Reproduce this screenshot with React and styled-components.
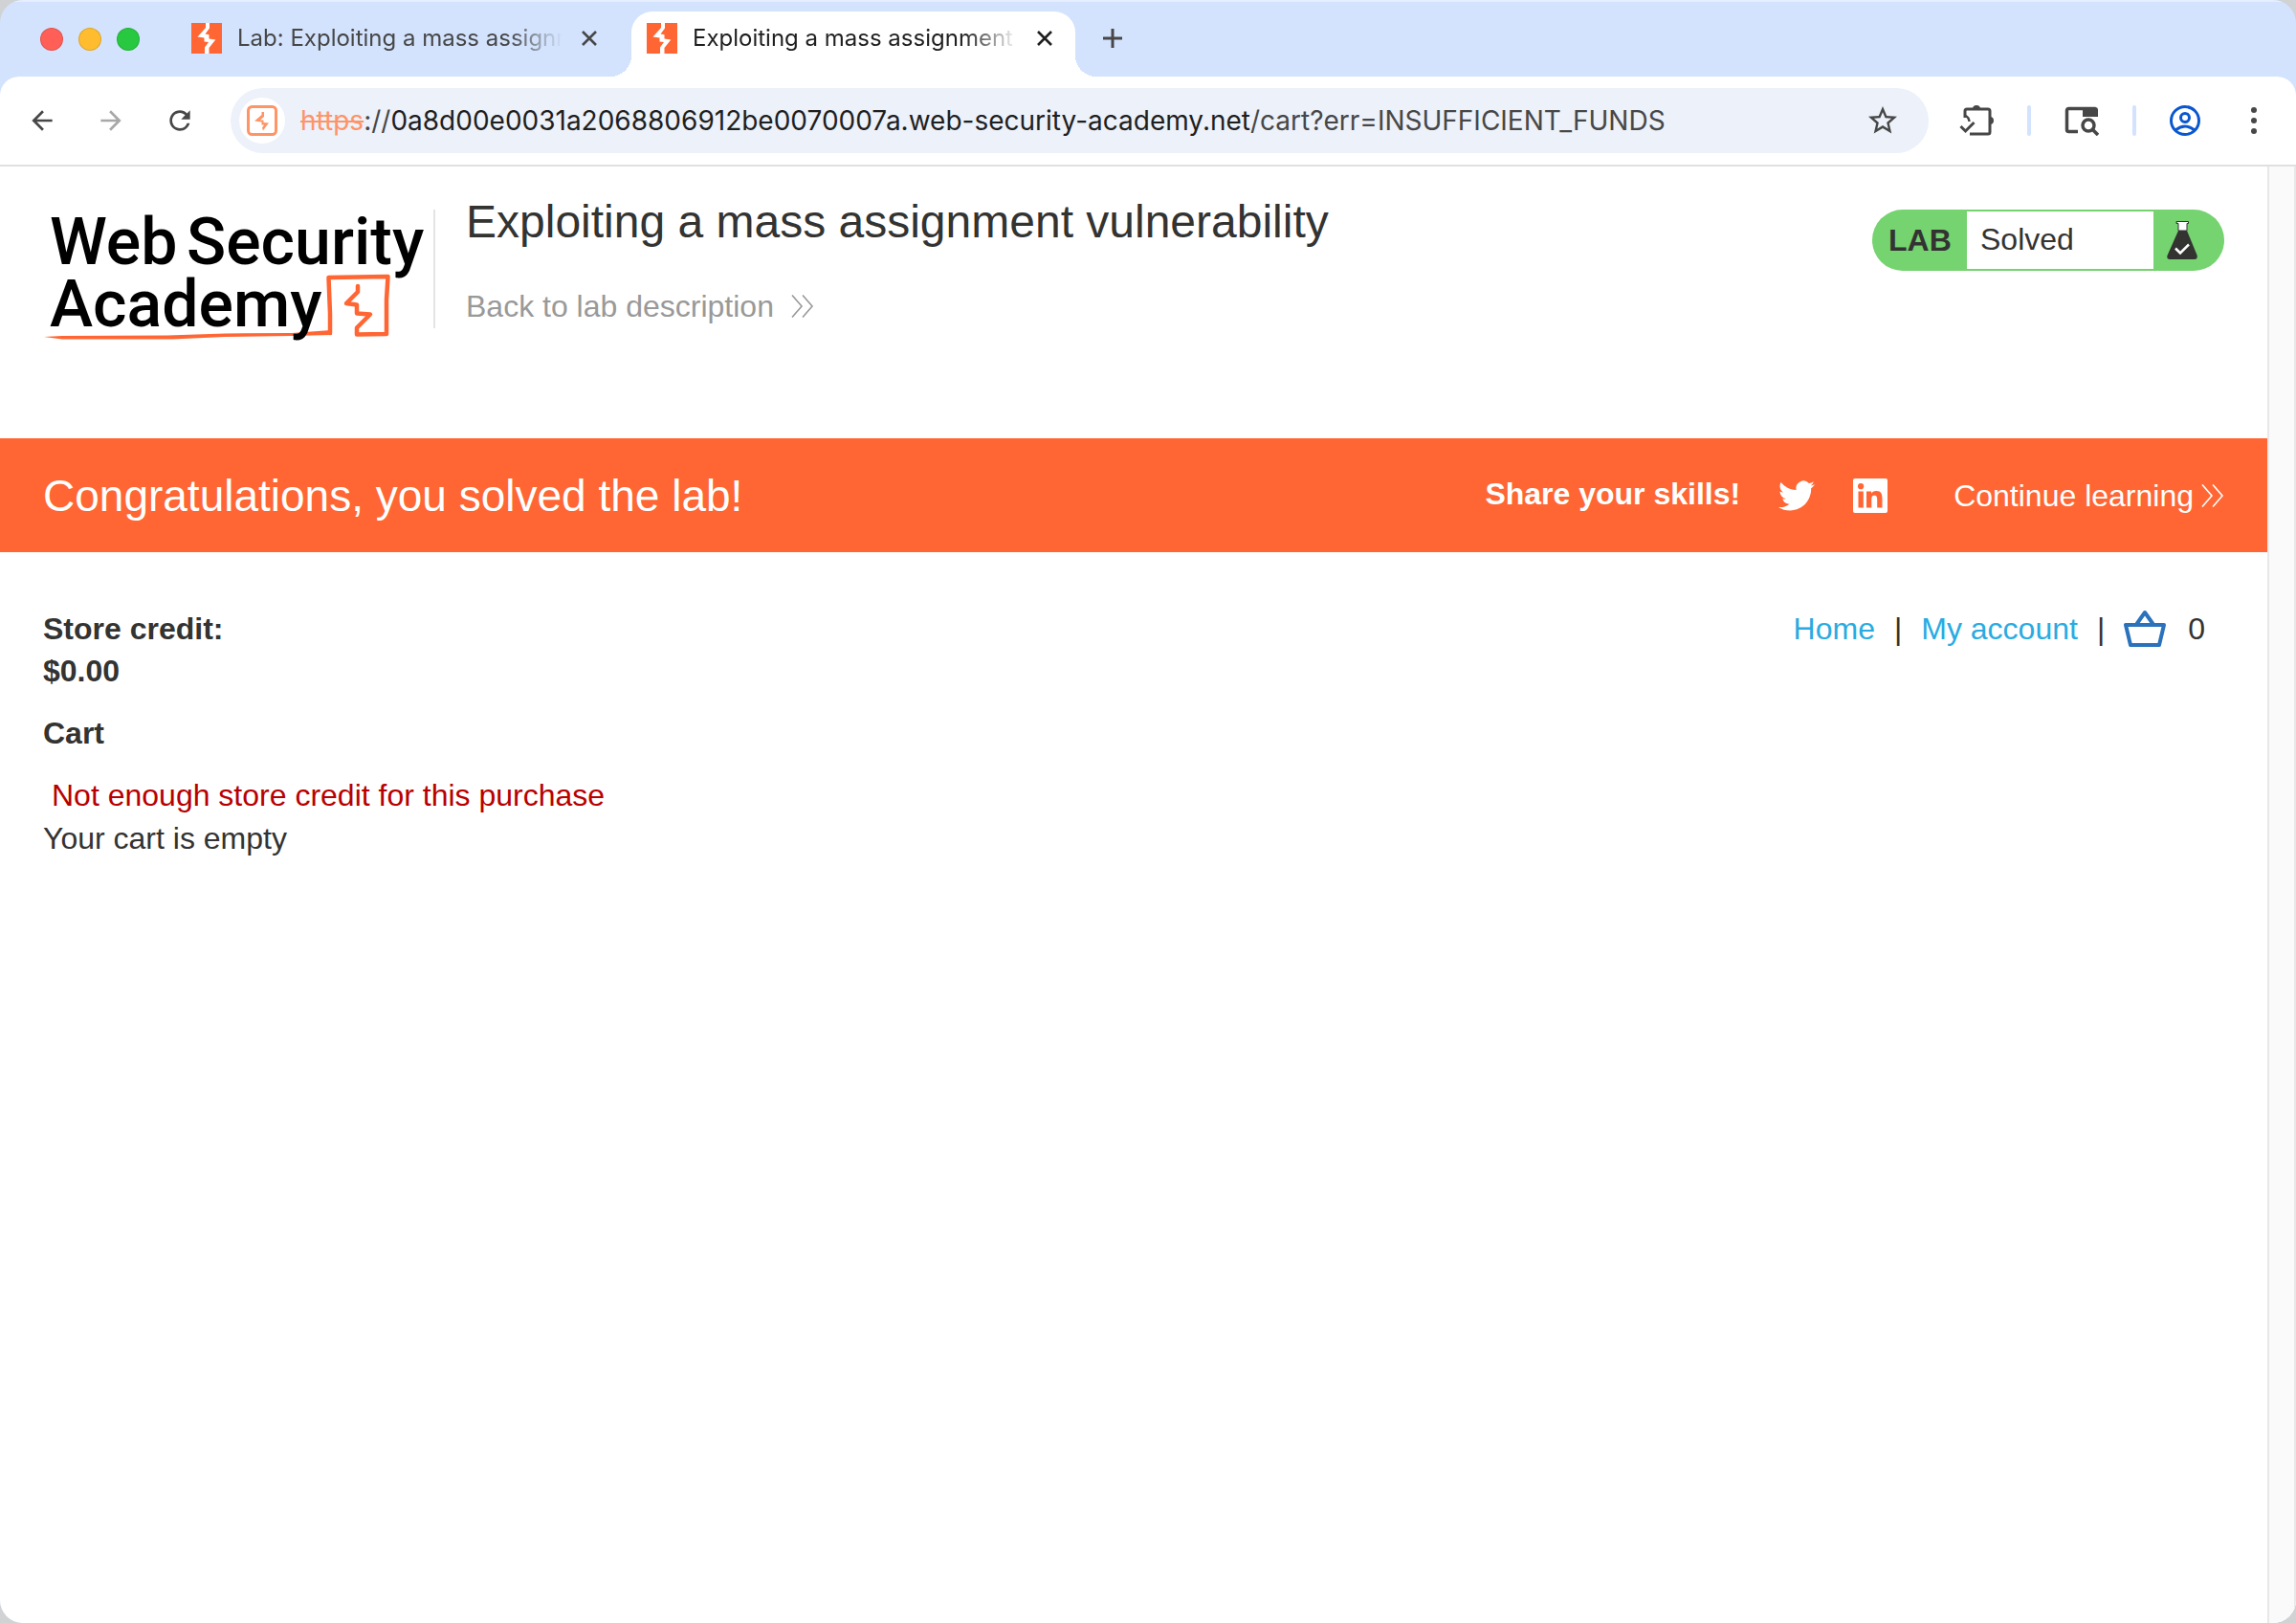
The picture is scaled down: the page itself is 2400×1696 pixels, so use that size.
import React, { useState } from 'react';
import styled, { createGlobalStyle } from 'styled-components';
import { MdArrowBack, MdArrowForward, MdRefresh, MdStarBorder } from 'react-icons/md';

const theme = {
  orange: '#ff6633',
  text: '#333332',
  link: '#29abe2',
  green: '#75d370',
  icon: '#474747',
  strip: '#d3e3fd',
};

const GlobalStyle = createGlobalStyle`
  *, *::before, *::after { box-sizing: border-box; }
  body {
    margin: 0;
    background: #d0d2d4;
    font-family: "Liberation Sans", Arial, sans-serif;
  }
  button {
    padding: 0;
    border: 0;
    background: none;
    font: inherit;
    color: inherit;
    cursor: pointer;
  }
  a { text-decoration: none; color: inherit; }
  svg { display: block; flex-shrink: 0; }
`;

const Window = styled.div`
  display: flex;
  flex-direction: column;
  min-height: 100vh;
  overflow: hidden;
  border-radius: 24px;
  background: ${theme.strip};
`;

/* ---------- tab strip ---------- */

const TabStrip = styled.div`
  display: flex;
  align-items: flex-end;
  height: 80px;
  padding-left: 42px;
  border-top: 2px solid #e6eefd;
  font-family: Inter, Roboto, sans-serif;
`;

const Lights = styled.div`
  display: flex;
  align-items: center;
  gap: 16px;
  height: 66px;
  margin-right: 38px;
  padding-bottom: 12px;
`;

const Light = styled.button`
  width: 24px;
  height: 24px;
  border: 1px solid rgba(0, 0, 0, 0.12);
  border-radius: 50%;
  background: ${(props) => props.$color};
`;

const Tab = styled.div`
  position: relative;
  display: flex;
  align-items: center;
  width: ${(props) => (props.$active ? 464 : 476)}px;
  height: 68px;
  padding: 0 ${(props) => (props.$active ? 20 : 32)}px 12px 16px;
  border-radius: 22px 22px 0 0;
  background: ${(props) => (props.$active ? '#fff' : 'transparent')};
  color: ${(props) => (props.$active ? '#1f1f1f' : '#474747')};

  /* outward curves at the foot of the active tab */
  &::before, &::after {
    content: '';
    display: ${(props) => (props.$active ? 'block' : 'none')};
    position: absolute;
    bottom: 0;
    width: 22px;
    height: 22px;
  }
  &::before {
    left: -22px;
    background: radial-gradient(circle at 0 0, transparent 22px, #fff 22px);
  }
  &::after {
    right: -22px;
    background: radial-gradient(circle at 100% 0, transparent 22px, #fff 22px);
  }
`;

const TabTitle = styled.button`
  flex: 1;
  min-width: 0;
  margin: 0 16px;
  overflow: hidden;
  font-size: 24px;
  line-height: 32px;
  text-align: left;
  white-space: nowrap;
  mask-image: linear-gradient(to right, #000 calc(100% - 56px), transparent);
`;

const TabClose = styled.button`
  padding: 4px;
`;

const NewTab = styled.button`
  margin: 0 0 29px 28px;
  color: ${theme.icon};
`;

/* ---------- toolbar ---------- */

const Toolbar = styled.div`
  display: flex;
  align-items: center;
  height: 94px;
  padding: 0 41px 0 28px;
  border-bottom: 2px solid #e0e0e0;
  border-radius: 20px 20px 0 0;
  background: #fff;
  color: ${theme.icon};
`;

const NavButtons = styled.div`
  display: flex;
  gap: 40px;
  margin-right: 37px;
`;

const NavButton = styled.button`
  color: ${theme.icon};
  &:disabled { color: #a8a8a8; }
`;

const AddressBar = styled.div`
  display: flex;
  align-items: center;
  flex: 1;
  height: 68px;
  padding: 0 30px 0 9px;
  border-radius: 34px;
  background: #ecf1fa;
`;

const SiteInfo = styled.button`
  display: grid;
  place-items: center;
  width: 48px;
  height: 48px;
  margin-right: 16px;
  border-radius: 50%;
  background: #fff;
`;

const Url = styled.div`
  flex: 1;
  font-family: Inter, Roboto, sans-serif;
  font-size: 28px;
  line-height: 36px;
  color: #474747;
  white-space: nowrap;
  s { color: #ff9466; }
  b { font-weight: 400; color: #1f1f1f; }
`;

const Tools = styled.div`
  display: flex;
  align-items: center;
  gap: 35px;
  margin-left: 32px;
`;

const MenuButton = styled.button`
  margin-left: 18px;
`;

const Divider = styled.span`
  width: 4px;
  height: 32px;
  border-radius: 2px;
  background: ${theme.strip};
`;

/* ---------- page ---------- */

const Viewport = styled.div`
  display: flex;
  flex: 1;
  background: #fff;
`;

const Page = styled.div`
  flex: 1;
  min-width: 0;
  color: ${theme.text};
  font-size: 32px;
  line-height: 44px;
`;

const ScrollTrack = styled.div`
  width: 30px;
  border: solid #e8e8e8;
  border-width: 0 2px;
  background: #fafafa;
`;

const Header = styled.header`
  display: flex;
  align-items: flex-start;
  height: 284px;
  padding: 36px 45px 0;
`;

const Titles = styled.div`
  flex: 1;
  margin-left: 32px;
`;

const LogoLink = styled.a`
  padding-right: 8px;
`;

const Rule = styled.div`
  width: 2px;
  height: 124px;
  margin-top: 9px;
  background: #e4e4e4;
`;

const Title = styled.h1`
  margin: 0 0 44px;
  font-size: 48px;
  font-weight: 400;
  line-height: 44px;
`;

const BackLink = styled.a`
  display: inline-flex;
  align-items: center;
  gap: 18px;
  color: #999;
`;

const Badge = styled.div`
  display: flex;
  width: 368px;
  height: 64px;
  margin-top: 9px;
  padding: 2px 0;
  border-radius: 32px;
  background: ${theme.green};
  line-height: 60px;
`;

const BadgeLabel = styled.strong`
  width: 99px;
  padding-left: 17px;
`;

const BadgeStatus = styled.span`
  flex: 1;
  padding-left: 14px;
  background: #fff;
  line-height: 58px;
`;

const BadgeIcon = styled.span`
  width: 74px;
  padding: 10px 0 0 14px;
`;

const Banner = styled.section`
  display: flex;
  align-items: center;
  height: 119px;
  padding: 0 45px;
  background: ${theme.orange};
  color: #fff;
`;

const BannerTitle = styled.h2`
  flex: 1;
  margin: 0;
  font-size: 46px;
  font-weight: 400;
  line-height: 56px;
`;

const Share = styled.div`
  display: flex;
  align-items: center;
  gap: 40px;
  margin-right: 69px;
`;

const ShareLabel = styled.strong`
  padding-bottom: 4px;
`;

const ContinueLink = styled.a`
  display: flex;
  align-items: center;
  gap: 8px;
`;

const Main = styled.main`
  display: flex;
  flex-direction: column;
  padding: 58px 45px 0;
`;

const StoreBar = styled.div`
  display: flex;
  justify-content: space-between;
  align-items: flex-start;
`;

const Credit = styled.p`
  margin: 0 0 21px;
  font-weight: 700;
`;

const StoreNav = styled.nav`
  display: flex;
  align-items: center;
  gap: 20px;
  padding-right: 20px;
  a { color: ${theme.link}; }
`;

const CartLink = styled.a`
  margin-right: 3px;
`;

const SectionTitle = styled.h3`
  margin: 0 0 21px;
  font-size: 32px;
  line-height: 44px;
`;

const Warning = styled.p`
  margin: 0 0 1px;
  padding-left: 9px;
  color: #b80000;
`;

const CartNote = styled.p`
  margin: 0;
`;

/* ---------- drawings ---------- */

const Favicon = () => (
  <svg width="32" height="32" viewBox="0 0 32 32">
    <path fill={theme.orange} d="M0 0h32v32H0z" />
    <path fill="#fff" d="M15 0h4v5.500L14.500 11.500l4 .8v4.200l6.800 1L18.500 26v6H14v-6.500l4-5.500-4.500-.5V15.500L6.500 14.500 15 5z" />
  </svg>
);

const SiteIcon = () => (
  <svg width="32" height="32" viewBox="0 0 32 32" fill="none">
    <rect x="1.500" y="1.500" width="29" height="29" rx="4" stroke="#ff9466" strokeWidth="3" />
    <path fill="#ff9466" d="M15.500 7H18v5l-4 3.500h3.500V18l5.500.5-3.500 4.500-2.500 3.500-1-3 2-3h-2.500v-3L8 16.500 15.500 10z" />
  </svg>
);

const Cross = () => (
  <svg width="16" height="16" viewBox="0 0 16 16" stroke="currentColor" strokeWidth="2.600">
    <path d="M1 1l14 14M15 1L1 15" />
  </svg>
);

const Plus = () => (
  <svg width="22" height="22" viewBox="0 0 22 22" stroke="currentColor" strokeWidth="3">
    <path d="M11 1v20M1 11h20" />
  </svg>
);

const Chevrons = () => (
  <svg width="24" height="24" viewBox="0 0 24 24" fill="none" stroke="currentColor" strokeWidth="1.600">
    <path d="M1 0.500L11 12 1 23.500M12 0.500L22 12 12 23.500" />
  </svg>
);

const PuzzleCheck = () => (
  <svg width="36" height="36" viewBox="0 0 36 36" fill="none">
    <path d="M6 15V8a2 2 0 0 1 2-2h22a2 2 0 0 1 2 2v22a2 2 0 0 1-2 2H11" stroke="currentColor" strokeWidth="3" />
    <path d="M14 6a4 4 0 0 1 8 0zM32 14a4 4 0 0 1 0 8z" fill="currentColor" />
    <path d="M6 13q4 1 4.500 6" stroke="currentColor" strokeWidth="2.500" />
    <path d="M1.500 24l5 5 9-9" stroke="currentColor" strokeWidth="3" />
  </svg>
);

const TabSearch = () => (
  <svg width="36" height="32" viewBox="0 0 36 32" fill="none">
    <path d="M14 27.500H4.500a2 2 0 0 1-2-2v-20a2 2 0 0 1 2-2h28" stroke="currentColor" strokeWidth="3.500" />
    <path d="M19 2h13a3 3 0 0 1 3 3v7H19z" fill="currentColor" />
    <circle cx="25" cy="21" r="6" stroke="currentColor" strokeWidth="3.500" />
    <path d="M29 25l6 6" stroke="currentColor" strokeWidth="3.500" />
  </svg>
);

const Profile = () => (
  <svg width="32" height="32" viewBox="0 0 32 32" fill="none" stroke="#0b57d0" strokeWidth="3">
    <circle cx="16" cy="16" r="14.500" />
    <circle cx="16" cy="13" r="4.500" />
    <path d="M6 26q10-8 20 0" />
  </svg>
);

const Dots = () => (
  <svg width="6" height="28" viewBox="0 0 6 28" fill="currentColor">
    <circle cx="3" cy="3" r="3" />
    <circle cx="3" cy="14" r="3" />
    <circle cx="3" cy="25" r="3" />
  </svg>
);

const Flask = () => (
  <svg width="32" height="40" viewBox="0 0 32 40">
    <path fill="#fff" d="M11 1h11v2h-1v8h-9V3h-1z" />
    <path fill="none" stroke={theme.text} d="M10 .5h12.500v2H21V10h-9V2.500h-2z" />
    <path fill={theme.text} d="M12 10h9l10.500 25.500Q32.500 40 29 40H3Q-.5 40 .5 36z" />
    <path d="M9 28.500l5 5 9-9" fill="none" stroke="#fff" strokeWidth="2.500" />
  </svg>
);

const Twitter = () => (
  <svg width="38" height="34" viewBox="0 2 24 20" fill="#fff">
    <path d="M23.950 4.570a10 10 0 0 1-2.820.770 4.960 4.960 0 0 0 2.160-2.720c-.950.550-2 .950-3.130 1.180a4.920 4.920 0 0 0-8.380 4.480C7.690 8.100 4.070 6.130 1.640 3.160a4.820 4.820 0 0 0-.660 2.480c0 1.710.870 3.210 2.190 4.100a4.900 4.900 0 0 1-2.230-.620v.060a4.920 4.920 0 0 0 3.950 4.830 5 5 0 0 1-2.210.080 4.940 4.940 0 0 0 4.600 3.420A9.870 9.870 0 0 1 0 19.540a13.990 13.990 0 0 0 7.560 2.210c9.050 0 14-7.500 14-13.980 0-.210 0-.420-.020-.630a9.940 9.940 0 0 0 2.460-2.550z" />
  </svg>
);

const LinkedIn = () => (
  <svg width="36" height="36" viewBox="0 0 36 36">
    <rect width="36" height="36" rx="2" fill="#fff" />
    <path fill={theme.orange} d="M5.500 13.500h5.300v17H5.500zM14 13.500h5.100v2.300c.8-1.500 2.500-2.800 5.100-2.800 5.300 0 6.300 3.500 6.300 8.100v9.400h-5.300v-8.300c0-2 0-4.500-2.800-4.500s-3.100 2.100-3.100 4.400v8.400H14z" />
    <circle cx="8.100" cy="8.200" r="3.100" fill={theme.orange} />
  </svg>
);

const Basket = () => (
  <svg width="44" height="40" viewBox="0 0 44 40" fill="none" stroke="#2a72bc" strokeWidth="4" strokeLinejoin="round">
    <path d="M2 16h40l-5 21H7zM13.500 15L22 3l8.500 12" />
  </svg>
);

const Logo = () => (
  <svg width="400" height="150" viewBox="0 0 400 150" role="img" aria-label="Web Security Academy">
    <path fill={theme.orange} d="M1 142l19-1 110-.5 60-2 70-.5 41-3 1 5-42 1-70 1-55 2.500H20z" />
    <path
      fill="none"
      stroke={theme.orange}
      strokeWidth="4.500"
      strokeLinejoin="round"
      strokeLinecap="round"
      d="M300 138v-20l-1.500-38 62-1-1.500 24 0 36-31 .5v-7l14-14-14-1v-9l-11-1.500 12-12V89"
    />
    <g fontFamily="Roboto, sans-serif" fontSize="68" fontWeight="500" fill="#000">
      <text x="7" y="66">Web</text>
      <text x="150" y="66">Security</text>
      <text x="7" y="131">Academy</text>
    </g>
  </svg>
);

const tabs = [
  { id: 'lab', title: 'Lab: Exploiting a mass assignment' },
  { id: 'exploit', title: 'Exploiting a mass assignment' },
];

function App() {
  const [active, setActive] = useState('exploit');

  return (
    <Window>
      <GlobalStyle />
      <TabStrip>
        <Lights>
          <Light $color="#ff5f57" aria-label="Close window" />
          <Light $color="#febc2e" aria-label="Minimise window" />
          <Light $color="#28c840" aria-label="Zoom window" />
        </Lights>
        {tabs.map((tab) => (
          <Tab key={tab.id} $active={tab.id === active}>
            <Favicon />
            <TabTitle onClick={() => setActive(tab.id)}>{tab.title}</TabTitle>
            <TabClose aria-label="Close tab"><Cross /></TabClose>
          </Tab>
        ))}
        <NewTab aria-label="New tab"><Plus /></NewTab>
      </TabStrip>

      <Toolbar>
        <NavButtons>
          <NavButton aria-label="Back"><MdArrowBack size={32} /></NavButton>
          <NavButton aria-label="Forward" disabled><MdArrowForward size={32} /></NavButton>
          <NavButton aria-label="Reload"><MdRefresh size={32} /></NavButton>
        </NavButtons>
        <AddressBar>
          <SiteInfo aria-label="Site information"><SiteIcon /></SiteInfo>
          <Url>
            <s>https</s>://<b>0a8d00e0031a2068806912be0070007a.web-security-academy.net</b>/cart?err=INSUFFICIENT_FUNDS
          </Url>
          <button aria-label="Bookmark"><MdStarBorder size={36} /></button>
        </AddressBar>
        <Tools>
          <button aria-label="Extensions"><PuzzleCheck /></button>
          <Divider />
          <button aria-label="Search tabs"><TabSearch /></button>
          <Divider />
          <button aria-label="Profile"><Profile /></button>
          <MenuButton aria-label="Menu"><Dots /></MenuButton>
        </Tools>
      </Toolbar>

      <Viewport>
        <Page>
          <Header>
            <LogoLink href="#academy"><Logo /></LogoLink>
            <Rule />
            <Titles>
              <Title>Exploiting a mass assignment vulnerability</Title>
              <BackLink href="#description">Back to lab description <Chevrons /></BackLink>
            </Titles>
            <Badge>
              <BadgeLabel>LAB</BadgeLabel>
              <BadgeStatus>Solved</BadgeStatus>
              <BadgeIcon><Flask /></BadgeIcon>
            </Badge>
          </Header>
          <Banner>
            <BannerTitle>Congratulations, you solved the lab!</BannerTitle>
            <Share>
              <ShareLabel>Share your skills!</ShareLabel>
              <a href="#twitter" aria-label="Twitter"><Twitter /></a>
              <a href="#linkedin" aria-label="LinkedIn"><LinkedIn /></a>
            </Share>
            <ContinueLink href="#continue">Continue learning <Chevrons /></ContinueLink>
          </Banner>
          <Main>
            <StoreBar>
              <Credit>Store credit:<br />$0.00</Credit>
              <StoreNav>
                <a href="#home">Home</a>
                <span>|</span>
                <a href="#account">My account</a>
                <span>|</span>
                <CartLink href="#cart" aria-label="Cart"><Basket /></CartLink>
                <span>0</span>
              </StoreNav>
            </StoreBar>
            <SectionTitle>Cart</SectionTitle>
            <Warning>Not enough store credit for this purchase</Warning>
            <CartNote>Your cart is empty</CartNote>
          </Main>
        </Page>
        <ScrollTrack />
      </Viewport>
    </Window>
  );
}

export default App;
